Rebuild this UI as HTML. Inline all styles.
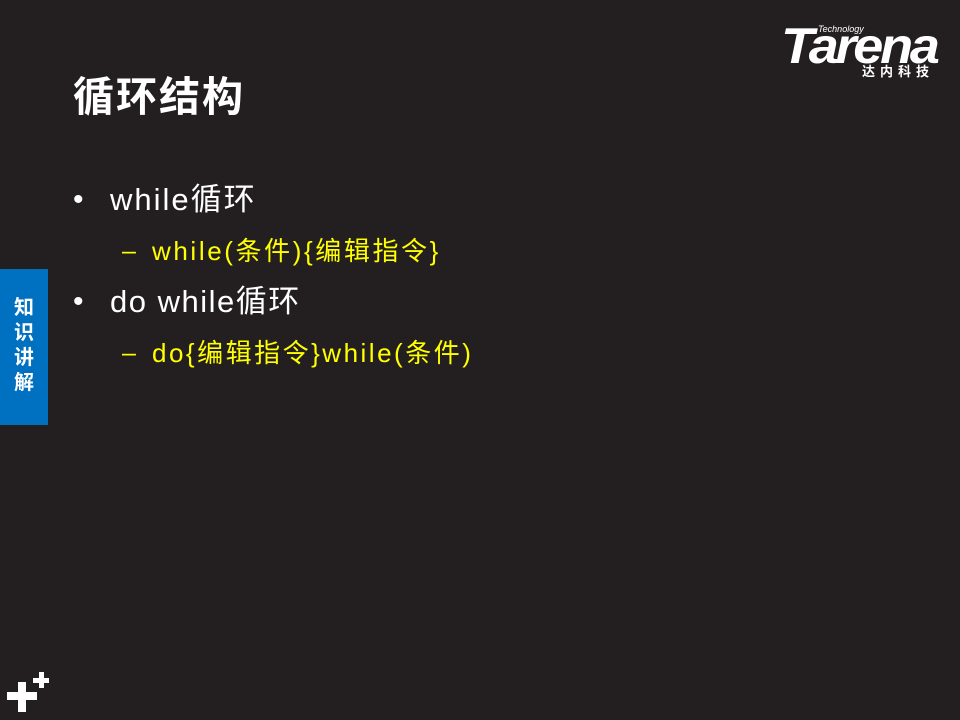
<html><head><style>
body{margin:0;width:960px;height:720px;background:#231f20;position:relative;overflow:hidden;font-family:"Liberation Sans","Noto Sans CJK SC",sans-serif;color:#fff}
.a{position:absolute;white-space:nowrap}
</style></head><body>
<div class="a" style="left:73px;top:70px;font-size:41px;font-weight:bold;line-height:54px;letter-spacing:2px">循环结构</div>
<div class="a" style="left:73px;top:180px;font-size:30px;line-height:40px">•</div>
<div class="a" style="left:110px;top:180px;font-size:31px;line-height:40px;letter-spacing:2px">while循环</div>
<div class="a" style="left:122px;top:233px;font-size:25px;line-height:36px;color:#ffff00">–</div>
<div class="a" style="left:152px;top:233px;font-size:26px;line-height:36px;color:#ffff00;letter-spacing:2.6px">while(条件){编辑指令}</div>
<div class="a" style="left:73px;top:282px;font-size:30px;line-height:40px">•</div>
<div class="a" style="left:110px;top:282px;font-size:31px;line-height:40px;letter-spacing:1.5px">do while循环</div>
<div class="a" style="left:122px;top:335px;font-size:25px;line-height:36px;color:#ffff00">–</div>
<div class="a" style="left:152px;top:335px;font-size:26px;line-height:36px;color:#ffff00;letter-spacing:2.5px">do{编辑指令}while(条件)</div>
<div class="a" style="left:0;top:269px;width:48px;height:156px;background:#0070c0"></div>
<div class="a" style="left:12px;top:296px;width:24px;font-size:20px;font-weight:bold;line-height:25px;white-space:normal;text-align:center">知识讲解</div>
<div class="a" style="left:7px;top:692px;width:30px;height:8px;background:#fff"></div>
<div class="a" style="left:18px;top:682px;width:8px;height:30px;background:#fff"></div>
<div class="a" style="left:33px;top:678px;width:16px;height:5px;background:#fff"></div>
<div class="a" style="left:39px;top:672px;width:5px;height:16px;background:#fff"></div>
<div class="a" style="left:818px;top:24px;font-size:9px;font-style:italic">Technology</div>
<div class="a" style="left:781px;top:20px;font-size:50px;font-weight:bold;font-style:italic;letter-spacing:-3px;line-height:52px;transform:scaleX(1.08);transform-origin:left">Tarena</div>
<div class="a" style="left:862px;top:64px;font-size:13px;font-weight:bold;letter-spacing:5px;line-height:16px">达内科技</div>
</body></html>
